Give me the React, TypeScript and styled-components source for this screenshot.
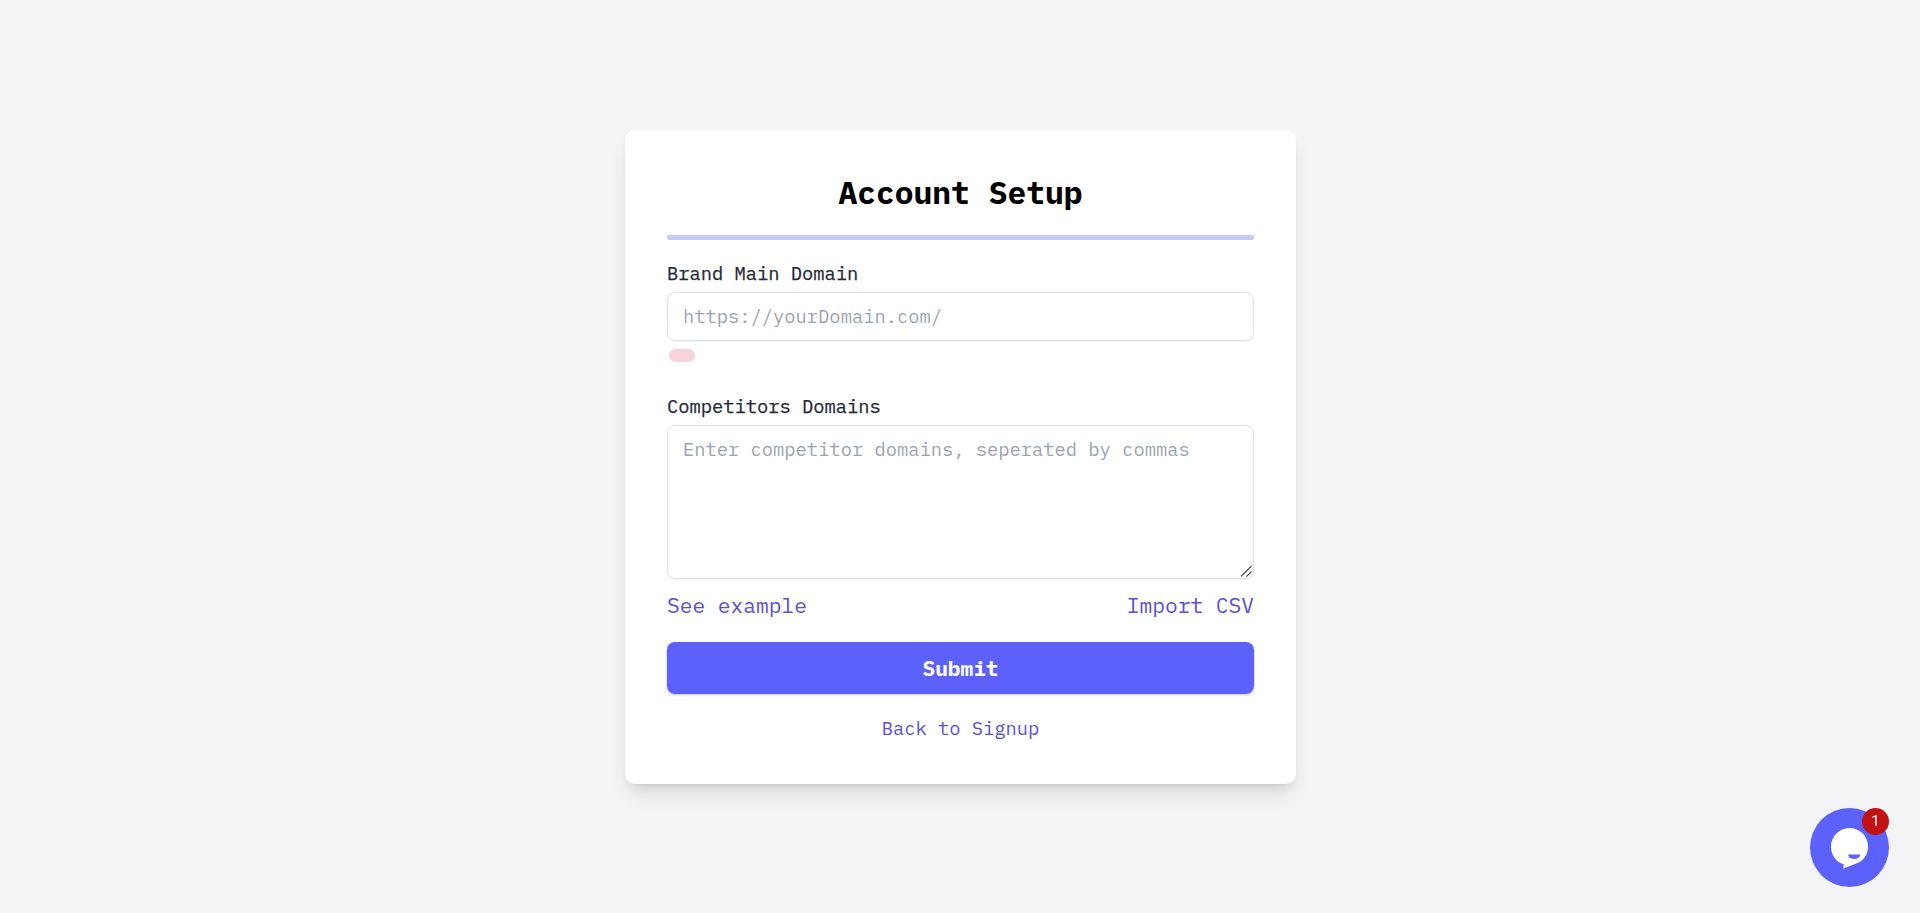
import React, { useState } from "react";
import styled, { createGlobalStyle } from "styled-components";

const GlobalStyle = createGlobalStyle`
  *, *::before, *::after {
    box-sizing: border-box;
  }

  body {
    margin: 0;
    background: #f3f4f6;
    font-family: "IBM Plex Mono", "Liberation Mono", monospace;
  }
`;

const Page = styled.main`
  display: flex;
  align-items: center;
  justify-content: center;
  height: 913px;
  padding-left: 1px;
  overflow: hidden;
`;

const Card = styled.form`
  display: flex;
  flex-direction: column;
  width: 671px;
  height: 654px;
  padding: 42px;
  border-radius: 10px;
  background: #fff;
  box-shadow: 0 13px 20px -4px rgba(0, 0, 0, 0.11),
    0 5px 8px -4px rgba(0, 0, 0, 0.11);

  > * {
    flex-shrink: 0;
  }
`;

const Title = styled.h1`
  margin: 0;
  color: #000;
  font-size: 31.3px;
  font-weight: 700;
  line-height: 42px;
  text-align: center;
`;

const Separator = styled.hr`
  width: 100%;
  height: 5px;
  margin: 21px 0 0;
  border: 0;
  border-radius: 2px;
  background: #c7caf4;
`;

const Label = styled.label`
  margin-top: 20px;
  color: #1f2937;
  font-size: 18.75px;
  line-height: 26px;
  -webkit-text-stroke: 0.25px #1f2937;
`;

const fieldStyle = `
  display: block;
  width: 100%;
  padding: 10px 15px;
  border: 1px solid #dfe1e5;
  border-radius: 8px;
  outline: none;
  background: #fff;
  box-shadow: 0 1px 2px rgba(0, 0, 0, 0.06);
  color: #1f2937;
  font-family: inherit;
  font-size: 18.77px;
  line-height: 27px;

  &::placeholder {
    color: #9ca3af;
    opacity: 1;
  }
`;

const Input = styled.input`
  ${fieldStyle}
  height: 49px;
  margin-top: 6px;
`;

const TextAreaWrapper = styled.div`
  position: relative;
  margin-top: 6px;

  svg {
    position: absolute;
    right: 1px;
    bottom: 1px;
    pointer-events: none;
  }
`;

const TextArea = styled.textarea`
  ${fieldStyle}
  height: 154px;
  resize: none;
`;

const ErrorPill = styled.div`
  width: 26px;
  height: 13px;
  margin: 8px 0 11px 2px;
  border-radius: 7px;
  background: #f6d4d8;
`;

const Links = styled.div`
  display: flex;
  justify-content: space-between;
  margin-top: 10px;
`;

const TextLink = styled.a<{ size: string }>`
  color: #5850d6;
  font-size: ${({ size }) => size};
  line-height: 32px;
  text-decoration: none;
  cursor: pointer;
`;

const SubmitButton = styled.button`
  height: 52px;
  margin-top: 21px;
  padding: 0;
  border: 0;
  border-radius: 8px;
  background: #5d61fb;
  box-shadow: 0 1px 3px rgba(93, 97, 251, 0.35);
  color: #fff;
  font-family: inherit;
  font-size: 21.1px;
  font-weight: 700;
  line-height: 32px;
`;

const Footer = styled.div`
  margin-top: 18px;
  text-align: center;
`;

const ChatButton = styled.button`
  position: fixed;
  right: 31px;
  bottom: 26px;
  width: 79px;
  height: 79px;
  padding: 0;
  border: 0;
  border-radius: 50%;
  background: #5d61fb;

  svg {
    display: block;
  }
`;

const ChatBadge = styled.span`
  position: absolute;
  top: 0;
  right: 0;
  width: 27px;
  height: 27px;
  border-radius: 50%;
  background: #c01212;
  color: #fff;
  font-family: Roboto, sans-serif;
  font-size: 15px;
  line-height: 27px;
  text-align: center;
`;

const ResizeGrip = () => (
  <svg width="14" height="14" viewBox="0 0 14 14">
    <path
      d="M2 12.5L12.5 2M7.5 12.5L12.5 7.5"
      fill="none"
      stroke="#4b4b4b"
      strokeWidth="1.2"
    />
  </svg>
);

const ChatIcon = () => (
  <svg width="79" height="79" viewBox="0 0 79 79">
    <path
      d="M39.5 20C49.7 20 58 28.2 58 38.4C58 46.2 53.8 52.3 47.5 55.1L34 60.3C33.1 60.7 32.9 60.2 33.2 59.4L34 56.4C26.3 54.3 21 47.4 21 38.8C21 28.3 29.3 20 39.5 20Z"
      fill="#fff"
    />
    <path
      d="M39 46.5H49.5C50.5 46.5 50.4 47.3 49.8 48.2C48.7 50 46.8 51 44.2 51C41.7 51 39.7 50 38.6 48.2C38 47.2 38 46.5 39 46.5Z"
      fill="#5d61fb"
    />
  </svg>
);

const App: React.FC = () => {
  const [domain, setDomain] = useState("");
  const [competitors, setCompetitors] = useState("");

  return (
    <>
      <GlobalStyle />
      <Page>
        <Card onSubmit={(e) => e.preventDefault()}>
          <Title>Account Setup</Title>
          <Separator />
          <Label htmlFor="domain">Brand Main Domain</Label>
          <Input
            id="domain"
            placeholder="https://yourDomain.com/"
            value={domain}
            onChange={(e) => setDomain(e.target.value)}
          />
          <ErrorPill />
          <Label htmlFor="competitors">Competitors Domains</Label>
          <TextAreaWrapper>
            <TextArea
              id="competitors"
              placeholder="Enter competitor domains, seperated by commas"
              value={competitors}
              onChange={(e) => setCompetitors(e.target.value)}
            />
            <ResizeGrip />
          </TextAreaWrapper>
          <Links>
            <TextLink size="21.2px">See example</TextLink>
            <TextLink size="21.2px">Import CSV</TextLink>
          </Links>
          <SubmitButton type="submit">Submit</SubmitButton>
          <Footer>
            <TextLink size="18.75px">Back to Signup</TextLink>
          </Footer>
        </Card>
      </Page>
      <ChatButton type="button" aria-label="Open chat">
        <ChatIcon />
        <ChatBadge>1</ChatBadge>
      </ChatButton>
    </>
  );
};

export default App;
